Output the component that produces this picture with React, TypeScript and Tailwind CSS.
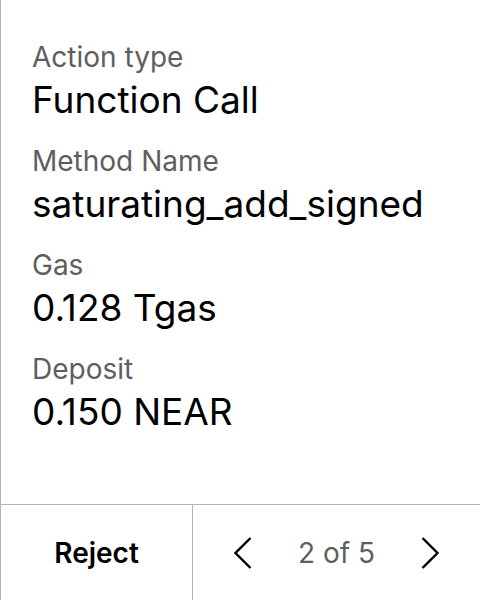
const rows = [
  { label: "Action type", value: "Function Call" },
  { label: "Method Name", value: "saturating_add_signed" },
  { label: "Gas", value: "0.128 Tgas" },
  { label: "Deposit", value: "0.150 NEAR" },
];

function Chevron({ dir }: { dir: "left" | "right" }) {
  return (
    <svg width="18" height="32" viewBox="0 0 18 32" fill="none" stroke="currentColor" strokeWidth="2.4">
      {dir === "left" ? <path d="M16.5 1 L1.5 16 L16.5 31" /> : <path d="M1.5 1 L16.5 16 L1.5 31" />}
    </svg>
  );
}

export default function App() {
  return (
    <div className="flex h-[600px] w-[480px] flex-col border-l border-[#b5b5b5] bg-white font-['Inter',sans-serif] text-black">
      <div className="flex flex-1 flex-col gap-[21px] pl-[31px] pt-[39px]">
        {rows.map((r) => (
          <div key={r.label} className="flex flex-col">
            <p className="text-[28px] leading-[36px] text-[#5e5e5e]">{r.label}</p>
            <p className="mt-[3px] text-[37px] leading-[44px]">{r.value}</p>
          </div>
        ))}
      </div>
      <div className="flex h-[96px] border-t border-[#b5b5b5]">
        <button className="flex w-[192px] items-center justify-center border-r border-[#b5b5b5] text-[28px] font-semibold">
          Reject
        </button>
        <div className="flex flex-1 items-center justify-center gap-[46px]">
          <Chevron dir="left" />
          <span className="text-[28px] text-[#5e5e5e]">2 of 5</span>
          <Chevron dir="right" />
        </div>
      </div>
    </div>
  );
}
